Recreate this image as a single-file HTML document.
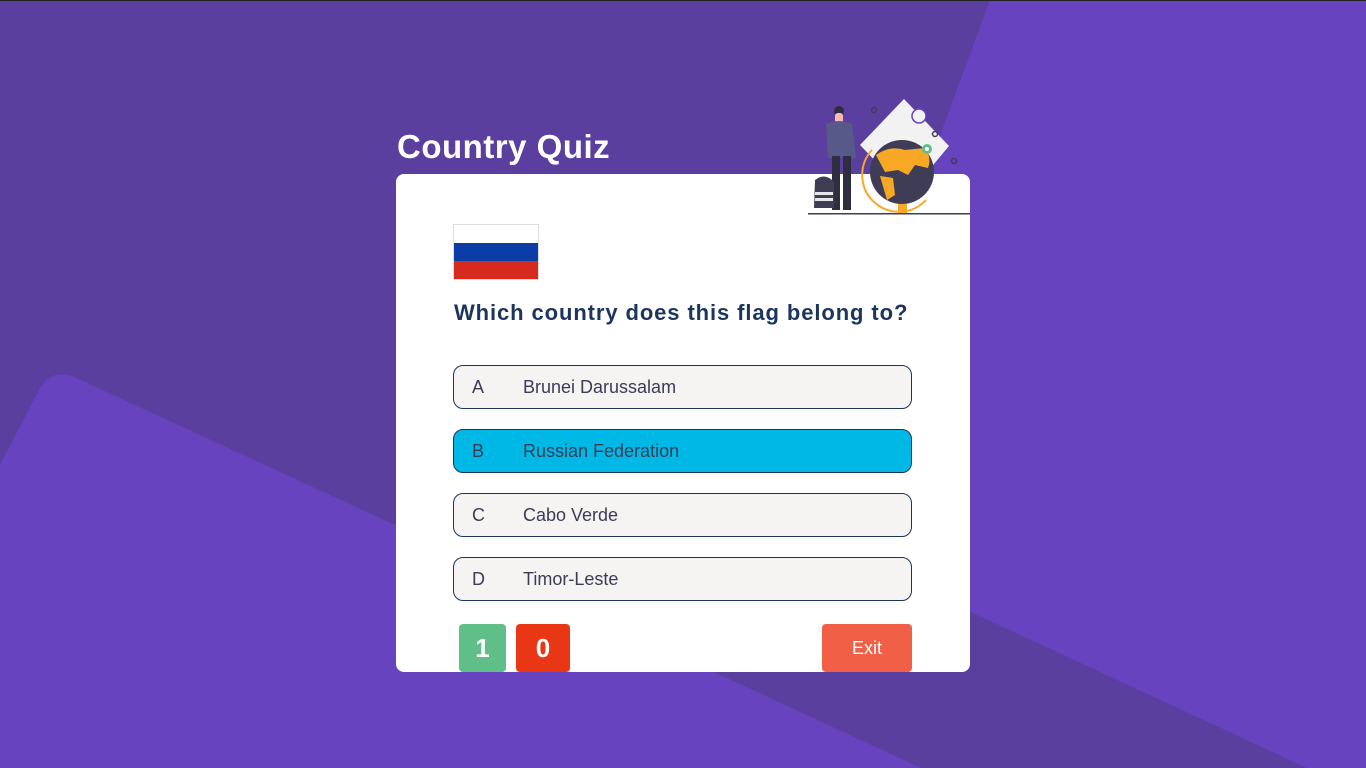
<!DOCTYPE html>
<html><head><meta charset="utf-8"><style>
*{margin:0;padding:0;box-sizing:border-box}
body{width:1366px;height:768px;overflow:hidden;background:#5b3f9f;font-family:"Liberation Sans",sans-serif;position:relative}
#bg{position:absolute;left:0;top:0}
#tl{position:absolute;left:0;top:0;width:1366px;height:1px;background:#222}
h1{position:absolute;left:397px;top:128px;color:#fff;font-size:33px;font-weight:bold;letter-spacing:0.5px}
.card{position:absolute;left:396px;top:174px;width:574px;height:498px;background:#fff;border-radius:8px}
.flag{position:absolute;left:57px;top:50px;width:86px;height:56px;border:1px solid #ddd}
.flag div{height:18px}
.q{position:absolute;left:58px;top:126px;font-size:22px;font-weight:bold;color:#1d355d;letter-spacing:0.9px}
.opt{position:absolute;left:57px;width:459px;height:44px;border:1px solid #1d355d;border-radius:10px;background:#f5f4f2;color:#3c3c55;font-size:18px;line-height:42px}
.opt span{position:absolute;left:18px}
.opt b{position:absolute;left:69px;font-weight:normal}
.sel{background:#00b8e6}
.sc{position:absolute;top:450px;height:48px;border-radius:4px;color:#fff;font-size:26px;font-weight:bold;text-align:center;line-height:48px}
.exit{position:absolute;left:426px;top:450px;width:90px;height:48px;border-radius:4px;background:#f05f46;color:#fff;font-size:18px;text-align:center;line-height:48px}
#ill{position:absolute;left:800px;top:95px}
</style></head><body>
<svg id="bg" width="1366" height="768">
<polygon fill="#6743bf" points="990,0 1366,0 1366,768 1307,768 850,556 850,380"/>
<path fill="#6743bf" d="M0,465 L40,388 Q50,370 72,376 L714,672 L921,768 L0,768 Z"/>
</svg>
<div id="tl"></div>
<h1>Country Quiz</h1>
<div class="card">
<div class="flag"><div style="background:#fff"></div><div style="background:#0a3da6"></div><div style="background:#d52b1e"></div></div>
<div class="q">Which country does this flag belong to?</div>
<div class="opt" style="top:191px"><span>A</span><b>Brunei Darussalam</b></div>
<div class="opt sel" style="top:255px"><span>B</span><b>Russian Federation</b></div>
<div class="opt" style="top:319px"><span>C</span><b>Cabo Verde</b></div>
<div class="opt" style="top:383px"><span>D</span><b>Timor-Leste</b></div>
<div class="sc" style="left:63px;width:47px;background:#60bf88">1</div>
<div class="sc" style="left:120px;width:54px;background:#e93615">0</div>
<div class="exit">Exit</div>
</div>
<svg id="ill" width="170" height="125" viewBox="800 95 170 125">
<polygon fill="#f2f2f2" points="904,99 949,146 908,195 860,145"/>
<circle cx="919" cy="116" r="7" fill="#f2f2f2" stroke="#6743bf" stroke-width="1.5"/>
<circle cx="874" cy="110" r="2.5" fill="none" stroke="#3f3d56" stroke-width="1.5"/>
<circle cx="935" cy="134" r="2.5" fill="none" stroke="#3f3d56" stroke-width="1.5"/>
<circle cx="954" cy="161" r="2.5" fill="none" stroke="#3f3d56" stroke-width="1.5"/>
<path d="M872,150 A33,33 0 0 0 926,200" fill="none" stroke="#f9a826" stroke-width="2"/>
<circle cx="902" cy="172" r="32" fill="#3f3d56"/>
<path d="M876,155 Q890,145 905,150 L925,148 Q932,158 928,168 L915,165 L908,175 L898,170 L885,172 Z" fill="#f9a826"/>
<path d="M880,176 L893,178 L895,195 L887,200 Z" fill="#f9a826"/>
<rect x="898" y="204" width="9" height="10" fill="#f9a826"/>
<circle cx="927" cy="149" r="5" fill="#60bf88"/><circle cx="927" cy="149" r="2" fill="#fff"/>
<circle cx="839" cy="111" r="5" fill="#2f2e41"/>
<rect x="835" y="113" width="8" height="10" rx="3" fill="#ffb8b8"/>
<path d="M826,124 Q839,118 852,124 L856,158 L828,158 Z" fill="#575a89"/>
<rect x="832" y="156" width="8" height="54" fill="#2f2e41"/>
<rect x="843" y="156" width="8" height="54" fill="#2f2e41"/>
<path d="M815,180 Q825,172 834,182 L834,208 L814,208 Z" fill="#3f3d56"/>
<rect x="815" y="192" width="18" height="3" fill="#e6e6e6"/>
<rect x="815" y="198" width="18" height="3" fill="#e6e6e6"/>
<rect x="808" y="213" width="162" height="1.5" fill="#3f3d56"/>
</svg>
</body></html>
